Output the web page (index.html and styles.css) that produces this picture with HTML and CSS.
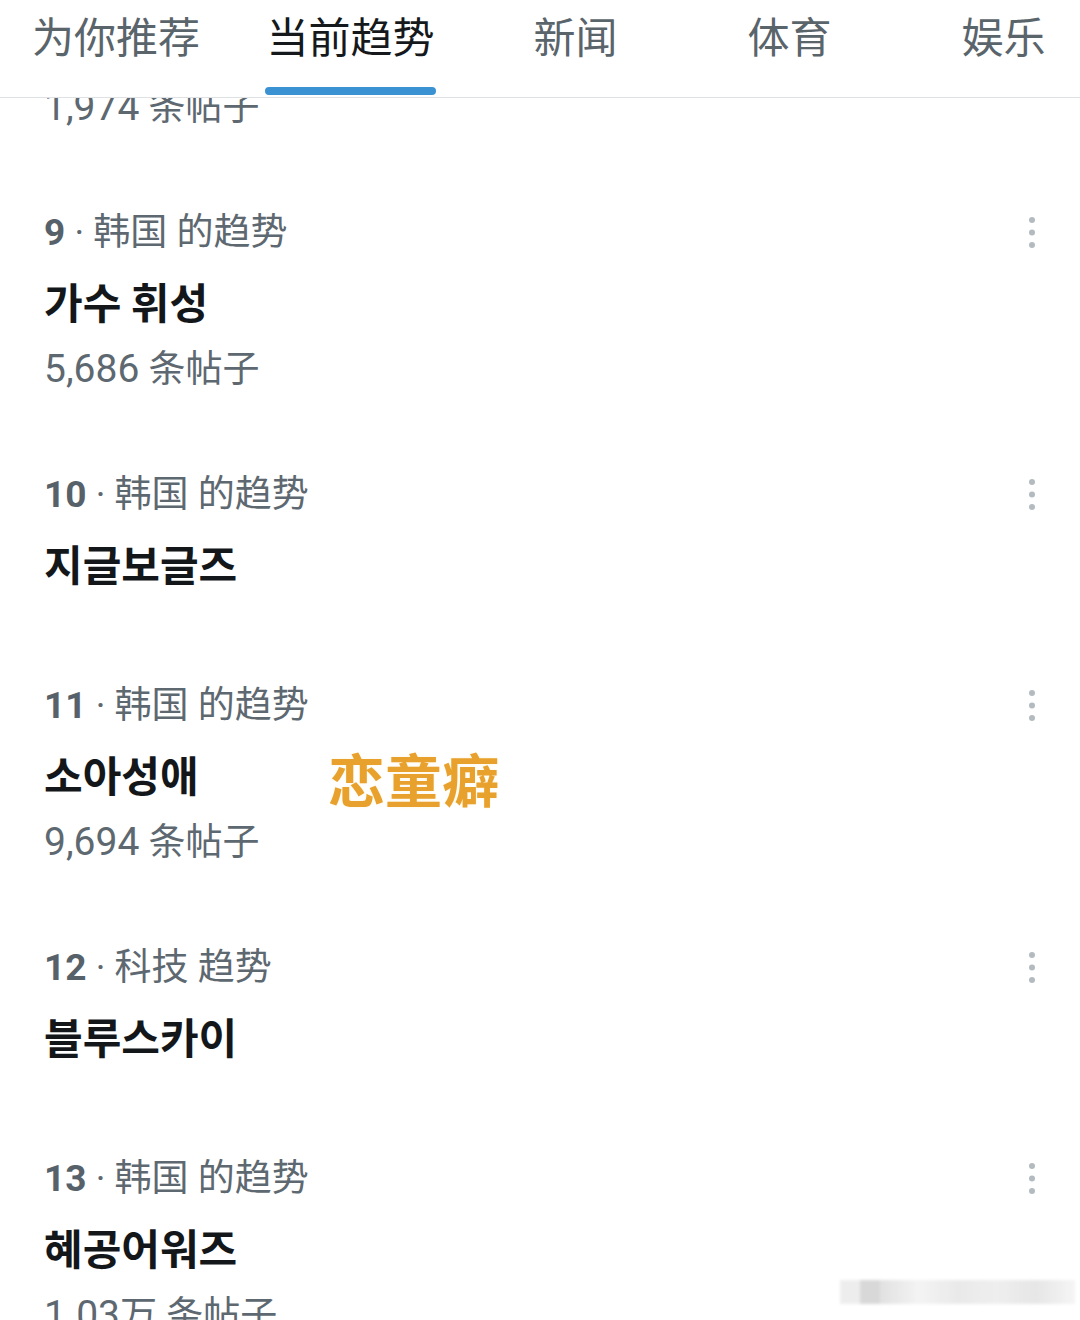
FILE: index.html
```html
<!DOCTYPE html>
<html lang="zh">
<head>
<meta charset="utf-8">
<title>当前趋势</title>
<link rel="stylesheet" href="styles.css">
</head>
<body>
<div class="screen">
  <header class="tabs">
    <div class="tab"><span class="tab-label">为你推荐</span></div>
    <div class="tab active"><span class="tab-label">当前趋势</span><span class="indicator"></span></div>
    <div class="tab"><span class="tab-label">新闻</span></div>
    <div class="tab"><span class="tab-label">体育</span></div>
    <div class="tab"><span class="tab-label">娱乐</span></div>
  </header>

  <main class="feed">
    <div class="partial">
      <div class="count"><span class="num">1,974</span> 条帖子</div>
    </div>

    <section class="trend">
      <div class="trend-body">
        <div class="meta"><b>9</b> · 韩国 的趋势</div>
        <div class="title">가수 휘성</div>
        <div class="count"><span class="num">5,686</span> 条帖子</div>
      </div>
      <svg class="more" width="6" height="31" viewBox="0 0 6 31"><circle cx="3" cy="3" r="3"/><circle cx="3" cy="15.5" r="3"/><circle cx="3" cy="28" r="3"/></svg>
    </section>

    <section class="trend no-count">
      <div class="trend-body">
        <div class="meta"><b>10</b> · 韩国 的趋势</div>
        <div class="title">지글보글즈</div>
      </div>
      <svg class="more" width="6" height="31" viewBox="0 0 6 31"><circle cx="3" cy="3" r="3"/><circle cx="3" cy="15.5" r="3"/><circle cx="3" cy="28" r="3"/></svg>
    </section>

    <section class="trend">
      <div class="trend-body">
        <div class="meta"><b>11</b> · 韩国 的趋势</div>
        <div class="title">소아성애</div>
        <div class="count"><span class="num">9,694</span> 条帖子</div>
      </div>
      <svg class="more" width="6" height="31" viewBox="0 0 6 31"><circle cx="3" cy="3" r="3"/><circle cx="3" cy="15.5" r="3"/><circle cx="3" cy="28" r="3"/></svg>
      <span class="annotation">恋童癖</span>
    </section>

    <section class="trend no-count">
      <div class="trend-body">
        <div class="meta"><b>12</b> · 科技 趋势</div>
        <div class="title">블루스카이</div>
      </div>
      <svg class="more" width="6" height="31" viewBox="0 0 6 31"><circle cx="3" cy="3" r="3"/><circle cx="3" cy="15.5" r="3"/><circle cx="3" cy="28" r="3"/></svg>
    </section>

    <section class="trend">
      <div class="trend-body">
        <div class="meta"><b>13</b> · 韩国 的趋势</div>
        <div class="title">혜공어워즈</div>
        <div class="count"><span class="num">1.03</span>万 条帖子</div>
      </div>
      <svg class="more" width="6" height="31" viewBox="0 0 6 31"><circle cx="3" cy="3" r="3"/><circle cx="3" cy="15.5" r="3"/><circle cx="3" cy="28" r="3"/></svg>
    </section>
  </main>

  <div class="watermark"><span class="wm-a"></span><span class="wm-b"></span><span class="wm-c"></span></div>
</div>
</body>
</html>
```

FILE: styles.css
```css
html, body {
  margin: 0;
  padding: 0;
  background: #ffffff;
}

.screen {
  position: relative;
  width: 1080px;
  height: 1320px;
  overflow: hidden;
  font-family: "Roboto", "Noto Sans CJK SC", "Noto Sans CJK KR", sans-serif;
  background: #ffffff;
}

/* ---------- tabs ---------- */
.tabs {
  display: flex;
  height: 97px;
  border-bottom: 1px solid #dfe2e4;
  background: #ffffff;
  position: relative;
  z-index: 2;
}

.tab {
  display: flex;
  flex-direction: column;
  align-items: center;
  padding: 0 33px 0 32px;
  min-width: 149px;
  flex: none;
}

.tab-label {
  font-family: "Noto Sans CJK SC", sans-serif;
  font-size: 42px;
  line-height: 70px;
  color: #5a646b;
}

.tab.active .tab-label {
  color: #15191c;
  font-weight: 400;
}

.indicator {
  display: block;
  width: 171px;
  height: 8px;
  margin-top: 17px;
  border-radius: 4px;
  background: #3a92d2;
}

/* ---------- feed ---------- */
.feed {
  display: flex;
  flex-direction: column;
}

.partial {
  height: 43px;
  display: flex;
  flex-direction: column;
  justify-content: flex-end;
  padding: 0 44px 34px;
  overflow: hidden;
}

.trend {
  position: relative;
  display: flex;
  align-items: flex-start;
  padding: 24px 45px 34px 44px;
}

.trend.no-count {
  padding-bottom: 51px;
}

.trend-body {
  flex: 1;
}

.meta {
  font-size: 37px;
  line-height: 68px;
  height: 68px;
  color: #5d6870;
  white-space: nowrap;
}

.meta b {
  font-family: "Roboto", sans-serif;
  font-weight: 700;
  color: #56616a;
}

.title {
  font-family: "Noto Sans CJK KR", sans-serif;
  font-size: 42px;
  font-weight: 700;
  line-height: 68px;
  height: 68px;
  color: #14171a;
}

.count {
  font-size: 37px;
  line-height: 68px;
  height: 68px;
  color: #5d6870;
  white-space: nowrap;
}

.count .num {
  font-family: "Roboto", sans-serif;
  font-size: 39px;
}

.more {
  flex: none;
  margin-top: 18px;
  fill: #b3bbc0;
}

.annotation {
  position: absolute;
  left: 328px;
  top: 99px;
  font-family: "Noto Sans CJK SC", sans-serif;
  font-size: 57px;
  font-weight: 700;
  line-height: 60px;
  color: #e9a12e;
  text-shadow: 0 0 3px #fff6e0;
}

/* ---------- watermark ---------- */
.watermark {
  position: absolute;
  left: 840px;
  top: 1280px;
  width: 235px;
  height: 24px;
  display: flex;
  filter: blur(1.5px);
  opacity: 0.85;
}

.wm-a {
  width: 20px;
  background: #ebebeb;
}

.wm-b {
  width: 20px;
  background: #d2d2d2;
}

.wm-c {
  flex: 1;
  background: linear-gradient(90deg, #dcdcdc 0%, #f2f2f2 20%, #e6e6e6 40%, #ececec 60%, #e2e2e2 80%, #f4f4f4 100%);
}
```
